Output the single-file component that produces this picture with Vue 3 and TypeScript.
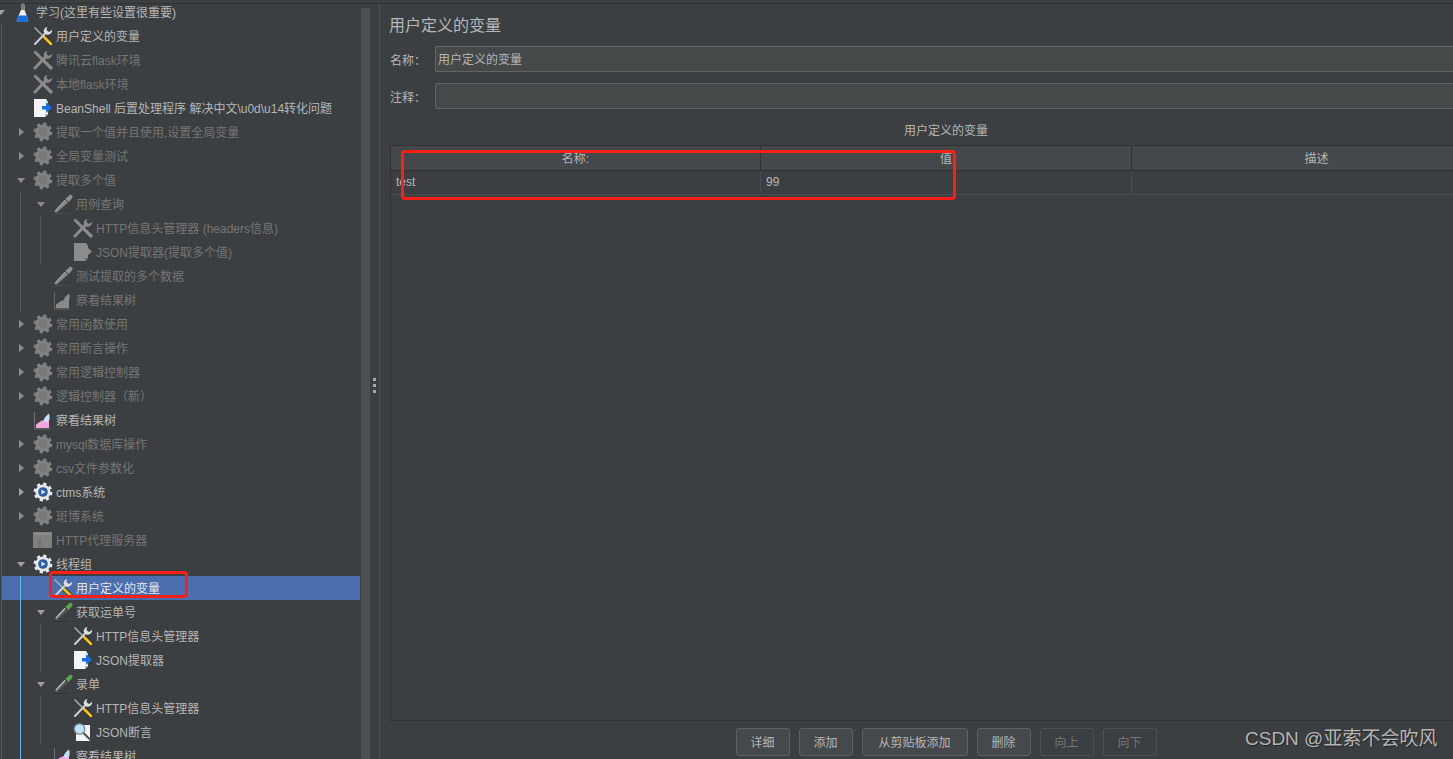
<script setup lang="ts">
type Kind = 'flask' | 'wrench' | 'script' | 'gear' | 'pencil' | 'chart' | 'proxy' | 'lens'

interface TreeRow {
  depth: number
  kind: Kind
  label: string
  off?: boolean
  open?: boolean
  closed?: boolean
  selected?: boolean
}

const rows: TreeRow[] = [
  { depth: 0, kind: 'flask', label: '学习(这里有些设置很重要)', open: true },
  { depth: 1, kind: 'wrench', label: '用户定义的变量' },
  { depth: 1, kind: 'wrench', label: '腾讯云flask环境', off: true },
  { depth: 1, kind: 'wrench', label: '本地flask环境', off: true },
  { depth: 1, kind: 'script', label: 'BeanShell 后置处理程序 解决中文\\u0d\\u14转化问题' },
  { depth: 1, kind: 'gear', label: '提取一个值并且使用,设置全局变量', off: true, closed: true },
  { depth: 1, kind: 'gear', label: '全局变量测试', off: true, closed: true },
  { depth: 1, kind: 'gear', label: '提取多个值', off: true, open: true },
  { depth: 2, kind: 'pencil', label: '用例查询', off: true, open: true },
  { depth: 3, kind: 'wrench', label: 'HTTP信息头管理器 (headers信息)', off: true },
  { depth: 3, kind: 'script', label: 'JSON提取器(提取多个值)', off: true },
  { depth: 2, kind: 'pencil', label: '测试提取的多个数据', off: true },
  { depth: 2, kind: 'chart', label: '察看结果树', off: true },
  { depth: 1, kind: 'gear', label: '常用函数使用', off: true, closed: true },
  { depth: 1, kind: 'gear', label: '常用断言操作', off: true, closed: true },
  { depth: 1, kind: 'gear', label: '常用逻辑控制器', off: true, closed: true },
  { depth: 1, kind: 'gear', label: '逻辑控制器（新）', off: true, closed: true },
  { depth: 1, kind: 'chart', label: '察看结果树' },
  { depth: 1, kind: 'gear', label: 'mysql数据库操作', off: true, closed: true },
  { depth: 1, kind: 'gear', label: 'csv文件参数化', off: true, closed: true },
  { depth: 1, kind: 'gear', label: 'ctms系统', closed: true },
  { depth: 1, kind: 'gear', label: '斑博系统', off: true, closed: true },
  { depth: 1, kind: 'proxy', label: 'HTTP代理服务器', off: true },
  { depth: 1, kind: 'gear', label: '线程组', open: true },
  { depth: 2, kind: 'wrench', label: '用户定义的变量', selected: true },
  { depth: 2, kind: 'pencil', label: '获取运单号', open: true },
  { depth: 3, kind: 'wrench', label: 'HTTP信息头管理器' },
  { depth: 3, kind: 'script', label: 'JSON提取器' },
  { depth: 2, kind: 'pencil', label: '录单', open: true },
  { depth: 3, kind: 'wrench', label: 'HTTP信息头管理器' },
  { depth: 3, kind: 'lens', label: 'JSON断言' },
  { depth: 2, kind: 'chart', label: '察看结果树' },
]

// connector lines of the tree: x, top, height
const guides = [
  { x: 1, top: 24, height: 735, active: false },
  { x: 20, top: 192, height: 120, active: false },
  { x: 40, top: 216, height: 48, active: false },
  { x: 20, top: 576, height: 183, active: true },
  { x: 40, top: 624, height: 48, active: false },
  { x: 40, top: 696, height: 48, active: false },
]

const buttons = [
  { label: '详细', width: 54 },
  { label: '添加', width: 54 },
  { label: '从剪贴板添加', width: 106 },
  { label: '删除', width: 54 },
  { label: '向上', width: 54, off: true },
  { label: '向下', width: 54, off: true },
]
</script>

<template>
  <div class="app">
    <div class="top-strip"></div>
    <div class="main">
      <div class="tree-pane">
        <div class="tree">
          <span
            v-for="(g, i) in guides"
            :key="i"
            class="guide"
            :class="{ active: g.active }"
            :style="{ left: g.x + 'px', top: g.top + 'px', height: g.height + 'px' }"
          ></span>
          <div
            v-for="(row, i) in rows"
            :key="i"
            class="row"
            :class="{ off: row.off, selected: row.selected }"
          >
            <div class="indent" :style="{ width: row.depth * 20 + 13 + 'px' }">
              <span
                v-if="row.open || row.closed"
                class="arrow"
                :class="row.open ? 'down' : 'right'"
                :style="{ marginLeft: row.depth * 20 - 3 + 'px' }"
              ></span>
            </div>

            <svg class="icon" viewBox="0 0 20 20" width="20" height="20">
              <g v-if="row.kind === 'flask'">
                <path d="M8 3h3.5v5l3.6 9.5c.3 1-.2 2.5-1.3 2.5H5.2c-1.1 0-1.6-1.5-1.3-2.5L8 8z" fill="#eef2f7" />
                <path d="M5.6 13.5h8.3l1.2 4c.3 1-.2 2.5-1.3 2.5H5.2c-1.1 0-1.6-1.5-1.3-2.5z" fill="#1f6fe0" />
                <path d="M8 1.5h3.5V8H8z" fill="#767d85" />
              </g>

              <g v-else-if="row.kind === 'wrench'">
                <path class="driver" d="M1.5 1.5l9 9" fill="none" stroke-width="1.3" />
                <path class="driver-edge" d="M11 11l7 7" fill="none" stroke-width="4.2" stroke-linecap="round" />
                <path class="driver-grip" d="M11 11l7 7" fill="none" stroke-width="2.8" stroke-linecap="round" />
                <path class="spanner" d="M2 18L13 6.5" fill="none" stroke-width="2" stroke-linecap="round" />
                <path class="spanner-head" d="M14.5 1c-2.6.3-4.2 2.5-3.6 5l2.4 2.5c2.6.7 5-.6 5.7-3.3l.1-1.4-3 2.2-2.4-1.4-.1-2.2z" />
              </g>

              <g v-else-if="row.kind === 'script'">
                <path class="sheet" d="M1 1h12l2 3v12l-3 3H1z" />
                <path class="sheet-fold" d="M12 19v-3h3z" />
                <path class="arrow-mark" d="M13 4l6 5.5-6 5.5v-3.5H9V8h4z" />
              </g>

              <g v-else-if="row.kind === 'gear'">
                <circle class="gear-rim" cx="10" cy="10" r="8.2" fill="none" stroke-width="2.4" stroke-dasharray="3.22 3.22" />
                <circle class="gear-body" cx="10" cy="10" r="7.6" />
                <circle class="gear-hub" cx="10" cy="10" r="4.8" />
                <path class="gear-play" d="M8.4 7.6l4.2 2.4-4.2 2.4z" />
              </g>

              <g v-else-if="row.kind === 'pencil'">
                <path class="pencil-shadow" d="M2 19.5h12" fill="none" stroke-width="1" />
                <path class="pencil-shaft" d="M1 17.5L12 5.5l3 3L3.5 18.5z" />
                <path class="pencil-top" d="M12.5 5L16 1.4c1-1 2.5-.8 3.2.2.6 1 .4 2-.4 2.8L15.5 8z" />
                <path class="pencil-glint" d="M3 16.2l9-9.8" fill="none" stroke-width="1.1" />
              </g>

              <g v-else-if="row.kind === 'chart'">
                <path class="chart-axis" d="M1.5 2v17H17" fill="none" stroke-width="1" />
                <path class="chart-area" d="M3 18v-3.5L8 11l3-1 5-3v11z" />
                <path class="chart-drop" d="M16 3.5c.8 2.5 1 5.2-.2 7.5-1 1.4-3.8 1.6-4.8-.4-.4-2.2 2.6-5.4 5-7.1z" />
              </g>

              <g v-else-if="row.kind === 'proxy'">
                <rect x="0" y="2" width="19" height="16" fill="#7f7f7f" />
                <rect x="1" y="3" width="17" height="2" fill="#8c8c8c" />
                <rect x="5" y="9" width="3" height="1.5" fill="#6c6c6c" />
                <rect x="5" y="12" width="3" height="1.5" fill="#6c6c6c" />
                <rect x="5" y="15" width="3" height="1.5" fill="#6c6c6c" />
              </g>

              <g v-else>
                <path d="M3 3h14v16H3z" fill="#f2f4f6" />
                <path d="M10.5 11l7.5 7.5" stroke="#4a4d50" stroke-width="2" />
                <circle cx="6.5" cy="7" r="5.2" fill="#bfe3f7" stroke="#7b8a96" stroke-width="1.3" />
              </g>
            </svg>

            <span class="label">{{ row.label }}</span>
          </div>
        </div>
        <div class="scrollbar"></div>
      </div>

      <div class="splitter">
        <span v-for="n in 3" :key="n" class="grip-dot"></span>
      </div>

      <div class="editor">
        <div class="title">用户定义的变量</div>
        <div class="field">
          <label>名称：</label>
          <div class="input">用户定义的变量</div>
        </div>
        <div class="field">
          <label>注释：</label>
          <div class="input"></div>
        </div>

        <div class="table-title">用户定义的变量</div>
        <div class="table">
          <div class="thead">
            <div class="cell">名称:</div>
            <div class="cell">值</div>
            <div class="cell">描述</div>
          </div>
          <div class="tbody-row">
            <div class="cell">test</div>
            <div class="cell">99</div>
            <div class="cell"></div>
          </div>
        </div>

        <div class="actions">
          <button
            v-for="b in buttons"
            :key="b.label"
            :class="{ off: b.off }"
            :style="{ width: b.width + 'px' }"
          >
            {{ b.label }}
          </button>
        </div>
      </div>
    </div>

    <div class="mark mark-tree"></div>
    <div class="mark mark-table"></div>
    <div class="watermark">CSDN @亚索不会吹风</div>
  </div>
</template>

<style>
html,
body {
  margin: 0;
  background: #3c3f41;
}
</style>

<style scoped>
.app {
  position: relative;
  width: 1453px;
  height: 759px;
  overflow: hidden;
  background: #3c3f41;
  color: #b6b6b6;
  font-family: "Liberation Sans", "Noto Sans CJK SC", sans-serif;
  font-size: 12px;
}

.top-strip {
  height: 3px;
  border-bottom: 1px solid #323232;
}

.main {
  display: flex;
  height: 755px;
}

.tree-pane {
  display: flex;
  width: 370px;
  flex: none;
}

.tree {
  position: relative;
  width: 361px;
  flex: none;
  margin-top: -4px;
  padding-left: 1px;
  box-sizing: border-box;
}

.guide {
  position: absolute;
  width: 1px;
  background: #55585a;
  z-index: 1;
}

.guide.active {
  background: #62b3f5;
}

.row {
  display: flex;
  align-items: center;
  height: 24px;
  margin-left: -1px;
  color: #b6b6b6;
  white-space: nowrap;
}

.row.off {
  color: #757575;
}

.row.selected {
  margin-left: 0;
  margin-right: 1px;
  background: #4b6eaf;
  color: #e6e6e6;
}

.row.selected .indent {
  margin-right: -1px;
}

.indent {
  flex: none;
}

.arrow {
  display: block;
  width: 0;
  height: 0;
}

.arrow.down {
  border-left: 4px solid transparent;
  border-right: 4px solid transparent;
  border-top: 5px solid #a0a0a0;
}

.arrow.right {
  border-top: 4px solid transparent;
  border-bottom: 4px solid transparent;
  border-left: 5px solid #a0a0a0;
  transform: translateX(2px);
}

.off .arrow.down {
  border-top-color: #8c8c8c;
}

.off .arrow.right {
  border-left-color: #8c8c8c;
}

.icon {
  flex: none;
  display: block;
}

.label {
  margin-left: 3px;
  margin-top: 2px;
  line-height: 24px;
}

/* enabled icon parts */
.driver { stroke: #b4b4b4; }
.driver-edge { stroke: #2a2a2a; }
.driver-grip { stroke: #f5c211; }
.spanner { stroke: #cfcfcf; }
.spanner-head { fill: #dedede; }
.sheet { fill: #f4f5f7; }
.sheet-fold { fill: #b8bcc2; }
.arrow-mark { fill: #1a6fe0; }
.gear-rim { stroke: #ececec; }
.gear-body { fill: #e6e8ec; }
.gear-hub { fill: #2a5ba3; }
.gear-play { fill: #d8e6f8; }
.pencil-shadow { stroke: #2d2f30; }
.pencil-shaft { fill: #54585b; }
.pencil-top { fill: #5fa152; }
.pencil-glint { stroke: #d5d8da; }
.chart-axis { stroke: #6d6d78; }
.chart-area { fill: #f5a6dc; }
.chart-drop { fill: #c6e0f5; }

/* greyed out when the element is disabled */
.off .driver,
.off .spanner {
  stroke: #8a8a8a;
  stroke-width: 3;
}
.off .driver-edge,
.off .driver-grip { stroke: #8a8a8a; stroke-width: 3; }
.off .spanner-head { fill: #8a8a8a; }
.off .sheet { fill: #8c8c8c; }
.off .sheet-fold { fill: #6e6e6e; }
.off .arrow-mark { fill: #8c8c8c; }
.off .gear-rim { stroke: #828282; }
.off .gear-body { fill: #828282; }
.off .gear-hub { fill: #787878; }
.off .gear-play { fill: #787878; }
.off .pencil-shadow { stroke: #4c4f51; }
.off .pencil-shaft { fill: #8a8a8a; }
.off .pencil-top { fill: #8f8f8f; }
.off .pencil-glint { stroke: #9a9a9a; }
.off .chart-axis { stroke: #666666; }
.off .chart-area { fill: #8a8a8a; }
.off .chart-drop { fill: #8a8a8a; }

.scrollbar {
  width: 9px;
  flex: none;
  margin-top: 4px;
  background: #4d5052;
}

.splitter {
  width: 10px;
  flex: none;
  box-sizing: border-box;
  border-right: 1px solid #4c4f51;
  display: flex;
  flex-direction: column;
  justify-content: center;
  align-items: center;
  gap: 3px;
  padding-right: 1px;
  padding-top: 7px;
}

.grip-dot {
  width: 3px;
  height: 3px;
  background: #a8a8a8;
}

.editor {
  width: 1133px;
  flex: none;
  box-sizing: border-box;
  padding: 0 11px 0 10px;
  display: flex;
  flex-direction: column;
}

.title {
  margin-top: 12px;
  line-height: 20px;
  font-size: 16px;
  margin-left: -1px;
  margin-bottom: 10px;
}

.field {
  display: flex;
  align-items: center;
  margin-bottom: 11px;
}

.field label {
  width: 45px;
  flex: none;
}

.input {
  flex: 1;
  height: 26px;
  box-sizing: border-box;
  padding: 1px 0 0 2px;
  background: #45494a;
  border: 1px solid #646464;
  border-radius: 2px;
  line-height: 24px;
}

.table-title {
  margin-top: 3px;
  line-height: 16px;
  text-align: center;
  margin-bottom: 6px;
}

.table {
  flex: 1;
  border: 1px solid #323232;
  background: #3c3f41;
}

.thead,
.tbody-row {
  display: grid;
  grid-template-columns: 369px 371px 1fr;
}

.thead {
  height: 24px;
  line-height: 26px;
  text-align: center;
  background: #45484a;
  border-bottom: 1px solid #323232;
}

.thead .cell + .cell {
  border-left: 1px solid #323232;
}

.tbody-row {
  height: 23px;
  line-height: 22px;
  border-bottom: 1px solid #4a4d4f;
}

.tbody-row .cell {
  padding-left: 5px;
}

.tbody-row .cell + .cell {
  border-left: 1px solid #4a4d4f;
}

.actions {
  display: flex;
  justify-content: center;
  gap: 9px;
  padding: 7px 0 3px;
  height: 28px;
}

.actions button {
  height: 28px;
  padding: 0 0 2px;
  box-sizing: border-box;
  background: #45494b;
  border: 1px solid #5e6060;
  border-radius: 3px;
  color: #b6b6b6;
  font: inherit;
}

.actions button.off {
  background: #3c3f41;
  border-color: #4d5052;
  color: #757575;
}

.mark {
  position: absolute;
  box-sizing: border-box;
  border: 3px solid #fb1f17;
  border-radius: 4px;
  z-index: 2;
}

.mark-tree {
  left: 49px;
  top: 571px;
  width: 139px;
  height: 27px;
}

.mark-table {
  left: 401px;
  top: 150px;
  width: 555px;
  height: 50px;
}

.watermark {
  position: absolute;
  left: 1245px;
  top: 727px;
  font-size: 19px;
  line-height: 24px;
  color: #b4b4b4;
  text-shadow: 1px 1px 1px #222222;
  z-index: 2;
}
</style>
